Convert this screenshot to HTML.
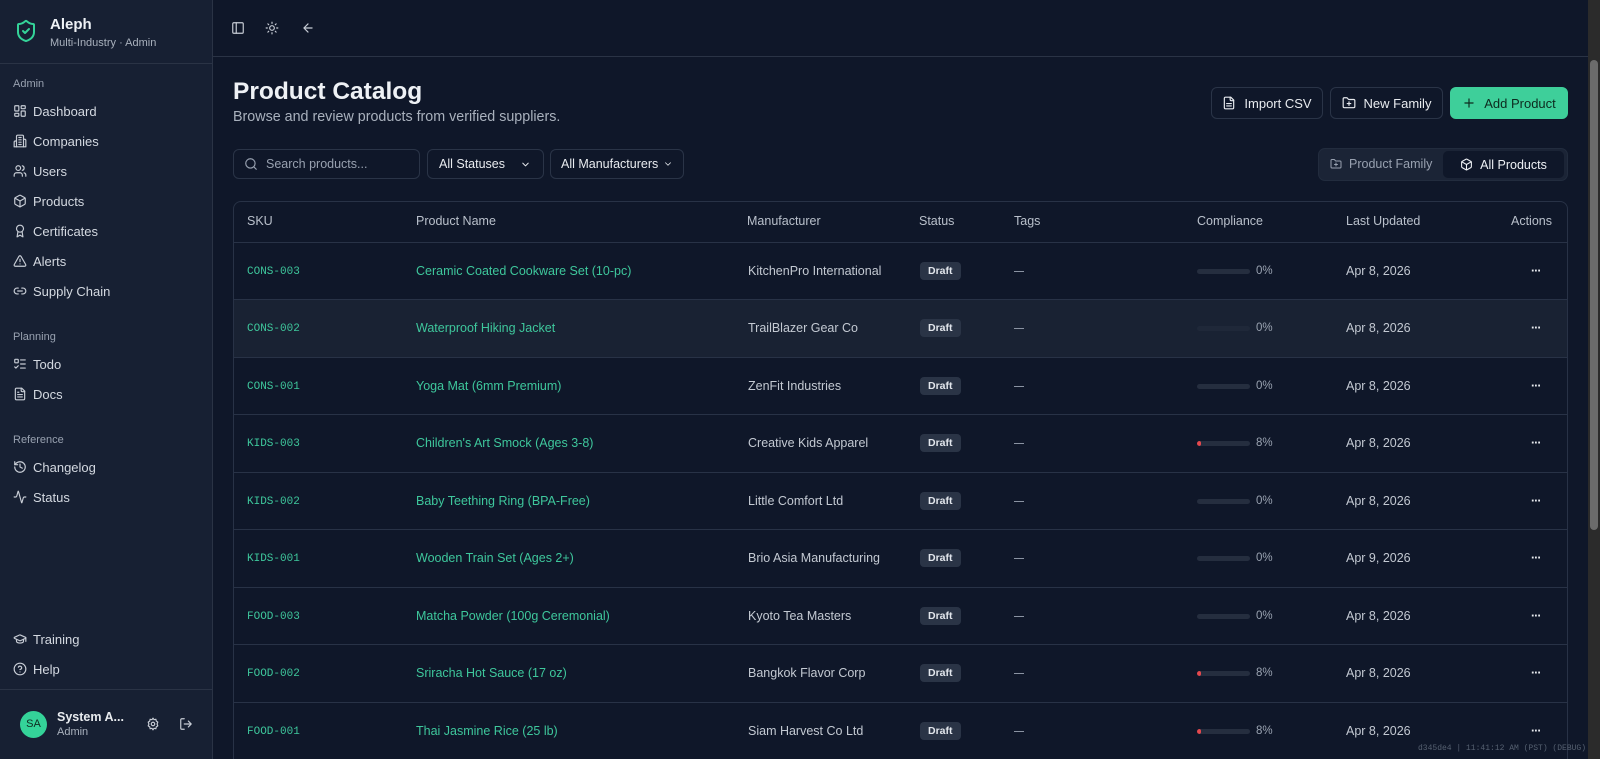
<!DOCTYPE html>
<html style="width:1600px;height:759px;overflow:hidden"><head><meta charset="utf-8">
<style>
*{box-sizing:border-box;margin:0;padding:0}
body{width:1600px;height:759px;overflow:hidden;background:#0f1729;font-family:"Liberation Sans",sans-serif;color:#e2e6ec;position:relative;white-space:nowrap}
#wrap{position:absolute;left:0;top:0;width:1600px;height:759px;overflow:hidden}
.a{position:absolute}
svg{fill:none;stroke:currentColor;stroke-width:2;stroke-linecap:round;stroke-linejoin:round}
#sb{left:0;top:0;width:213px;height:759px;background:#172033;border-right:1px solid #2a3345}
.lbl{font-size:11px;color:#98a1b0;left:13px}
.it{left:13px;font-size:13px;color:#d4d9e1;display:flex;align-items:center;gap:6px;height:20px}
.it svg{width:14px;height:14px;color:#c8cdd6}
.btn{border:1px solid #2a3447;border-radius:6px;height:32px;display:flex;align-items:center;justify-content:center;gap:8px;font-size:13px;color:#e8ebef;background:#0f1729}
.btn svg{width:14px;height:14px;flex:none}
.th{top:201px;height:41px;line-height:41px;font-size:12.5px;color:#b9c0cb}
.row{left:234px;width:1333px;height:58px;border-top:1px solid #283246}
.c{position:absolute;top:0;height:57px;line-height:57px;font-size:12.5px}
.sku{left:13px;font-family:"Liberation Mono",monospace;font-size:11px;color:#3ec79c;top:1px}
.pn{left:182px;color:#3ec79c;font-size:12.5px}
.mf{left:514px;color:#c3c9d2}
.badge{position:absolute;left:686px;top:19px;height:18px;line-height:18px;padding:0 8px;background:#2a3446;border-radius:4px;font-size:10.5px;font-weight:bold;color:#e2e6ec}
.dash{position:absolute;left:780px;top:28px;width:10px;height:1px;background:#8a93a2}
.bar{position:absolute;left:963px;top:26px;width:53px;height:5px;border-radius:3px;background:#252e3f;overflow:hidden}
.bar i{display:block;height:5px;width:4px;background:#e5484d;border-radius:3px}
.pct{left:1022px;color:#9aa3b1;font-size:11.5px}
.dt{left:1112px;color:#c3c9d2}
.dots{left:1297px;color:#e8ebef;font-weight:bold;letter-spacing:-1px;top:0}
</style></head><body><div id="wrap">
<div id="sb" class="a">
  <svg class="a" style="left:14px;top:18px;width:24px;height:26px;color:#34d399" viewBox="0 0 24 24"><path d="M20 13c0 5-3.5 7.5-7.66 8.95a1 1 0 0 1-.67-.01C7.5 20.5 4 18 4 13V6a1 1 0 0 1 1-1c2 0 4.5-1.2 6.24-2.720a1.17 1.17 0 0 1 1.52 0C14.51 3.81 17 5 19 5a1 1 0 0 1 1 1z"/><path d="m9 12 2 2 4-4"/></svg>
  <div class="a" style="left:50px;top:16px;font-size:15px;font-weight:bold;color:#eef1f5">Aleph</div>
  <div class="a" style="left:50px;top:37px;font-size:11px;color:#a9b1bd">Multi-Industry · Admin</div>
  <div class="a" style="left:0;top:63px;width:213px;height:1px;background:#2a3345"></div>
  <div class="a lbl" style="top:78px">Admin</div>
  <div class="a it" style="top:101px"><svg viewBox="0 0 24 24"><rect x="3" y="3" width="7" height="9" rx="1"/><rect x="14" y="3" width="7" height="5" rx="1"/><rect x="14" y="12" width="7" height="9" rx="1"/><rect x="3" y="16" width="7" height="5" rx="1"/></svg>Dashboard</div>
  <div class="a it" style="top:131px"><svg viewBox="0 0 24 24"><path d="M6 22V4a2 2 0 0 1 2-2h8a2 2 0 0 1 2 2v18z"/><path d="M6 12H4a2 2 0 0 0-2 2v8h4M18 9h2a2 2 0 0 1 2 2v11h-4M10 6h4M10 10h4M10 14h4M10 18h4"/></svg>Companies</div>
  <div class="a it" style="top:161px"><svg viewBox="0 0 24 24"><path d="M16 21v-2a4 4 0 0 0-4-4H6a4 4 0 0 0-4 4v2"/><circle cx="9" cy="7" r="4"/><path d="M22 21v-2a4 4 0 0 0-3-3.87M16 3.13a4 4 0 0 1 0 7.75"/></svg>Users</div>
  <div class="a it" style="top:191px"><svg viewBox="0 0 24 24"><path d="M21 8a2 2 0 0 0-1-1.73l-7-4a2 2 0 0 0-2 0l-7 4A2 2 0 0 0 3 8v8a2 2 0 0 0 1 1.73l7 4a2 2 0 0 0 2 0l7-4A2 2 0 0 0 21 16Z"/><path d="m3.3 7 8.7 5 8.7-5M12 22V12"/></svg>Products</div>
  <div class="a it" style="top:221px"><svg viewBox="0 0 24 24"><circle cx="12" cy="8" r="6"/><path d="M15.5 12.9 17 22l-5-3-5 3 1.5-9.1"/></svg>Certificates</div>
  <div class="a it" style="top:251px"><svg viewBox="0 0 24 24"><path d="m21.7 18-8-14a2 2 0 0 0-3.5 0l-8 14A2 2 0 0 0 4 21h16a2 2 0 0 0 1.7-3M12 9v4M12 17h.01"/></svg>Alerts</div>
  <div class="a it" style="top:281px"><svg viewBox="0 0 24 24"><path d="M9 17H7A5 5 0 0 1 7 7h2M15 7h2a5 5 0 1 1 0 10h-2M8 12h8"/></svg>Supply Chain</div>
  <div class="a lbl" style="top:331px">Planning</div>
  <div class="a it" style="top:354px"><svg viewBox="0 0 24 24"><path d="M13 5h8M13 12h8M13 19h8M3 17l2 2 4-4"/><rect x="3" y="4" width="6" height="6" rx="1"/></svg>Todo</div>
  <div class="a it" style="top:384px"><svg viewBox="0 0 24 24"><path d="M15 2H6a2 2 0 0 0-2 2v16a2 2 0 0 0 2 2h12a2 2 0 0 0 2-2V7Z"/><path d="M14 2v4a2 2 0 0 0 2 2h4M10 9H8M16 13H8M16 17H8"/></svg>Docs</div>
  <div class="a lbl" style="top:434px">Reference</div>
  <div class="a it" style="top:457px"><svg viewBox="0 0 24 24"><path d="M3 12a9 9 0 1 0 9-9 9.75 9.75 0 0 0-6.74 2.74L3 8"/><path d="M3 3v5h5M12 7v5l4 2"/></svg>Changelog</div>
  <div class="a it" style="top:487px"><svg viewBox="0 0 24 24"><path d="M22 12h-2.48a2 2 0 0 0-1.93 1.46l-2.35 8.36a.25.25 0 0 1-.48 0L9.24 2.18a.25.25 0 0 0-.48 0l-2.35 8.36A2 2 0 0 1 4.49 12H2"/></svg>Status</div>
  <div class="a it" style="top:629px"><svg viewBox="0 0 24 24"><path d="M21.4 10.9a1 1 0 0 0 0-1.8L12.8 5.2a2 2 0 0 0-1.7 0L2.6 9.1a1 1 0 0 0 0 1.8l8.6 3.9a2 2 0 0 0 1.7 0z"/><path d="M22 10v6M6 12.5V16a6 3 0 0 0 12 0v-3.5"/></svg>Training</div>
  <div class="a it" style="top:659px"><svg viewBox="0 0 24 24"><circle cx="12" cy="12" r="10"/><path d="M9.1 9a3 3 0 0 1 5.8 1c0 2-3 3-3 3M12 17h.01"/></svg>Help</div>
  <div class="a" style="left:0;top:689px;width:213px;height:1px;background:#2a3345"></div>
  <div class="a" style="left:20px;top:711px;width:27px;height:27px;border-radius:50%;background:#34d399;color:#0f2a20;font-size:11px;line-height:27px;text-align:center">SA</div>
  <div class="a" style="left:57px;top:710px;font-size:12.5px;font-weight:bold;color:#e8ebef">System A...</div>
  <div class="a" style="left:57px;top:726px;font-size:11px;color:#a9b1bd">Admin</div>
  <svg class="a" style="left:146px;top:717px;width:14px;height:14px;color:#c8cdd6" viewBox="0 0 24 24"><circle cx="12" cy="12" r="3"/><path d="M12 2l1.8 2.6 3.1-.7.7 3.1L20.2 8.8 19 12l1.2 3.2-2.6 1.8-.7 3.1-3.1-.7L12 22l-1.8-2.6-3.1.7-.7-3.1L3.8 15.2 5 12 3.8 8.8 6.4 7l.7-3.1 3.1.7z"/></svg>
  <svg class="a" style="left:179px;top:717px;width:14px;height:14px;color:#c8cdd6" viewBox="0 0 24 24"><path d="M9 21H5a2 2 0 0 1-2-2V5a2 2 0 0 1 2-2h4M16 17l5-5-5-5M21 12H9"/></svg>
</div>
<!-- header -->
<div class="a" style="left:213px;top:56px;width:1375px;height:1px;background:#2a3345"></div>
<svg class="a" style="left:231px;top:21px;width:14px;height:14px;color:#c8cdd6" viewBox="0 0 24 24"><rect x="3" y="3" width="18" height="18" rx="2"/><path d="M9 3v18"/></svg>
<svg class="a" style="left:265px;top:21px;width:14px;height:14px;color:#c8cdd6" viewBox="0 0 24 24"><circle cx="12" cy="12" r="4"/><path d="M12 2v2M12 20v2M4.93 4.93l1.41 1.41M17.66 17.66l1.41 1.41M2 12h2M20 12h2M6.34 17.66l-1.41 1.41M19.07 4.93l-1.41 1.41"/></svg>
<svg class="a" style="left:301px;top:21px;width:14px;height:14px;color:#c8cdd6" viewBox="0 0 24 24"><path d="m12 19-7-7 7-7M19 12H5"/></svg>
<!-- title -->
<div class="a" style="left:233px;top:78px;font-size:24.5px;font-weight:bold;color:#eef1f5">Product Catalog</div>
<div class="a" style="left:233px;top:109px;font-size:14.3px;color:#a9b1bd">Browse and review products from verified suppliers.</div>
<div class="a btn" style="left:1211px;top:87px;width:112px"><svg viewBox="0 0 24 24"><path d="M15 2H6a2 2 0 0 0-2 2v16a2 2 0 0 0 2 2h12a2 2 0 0 0 2-2V7Z"/><path d="M14 2v4a2 2 0 0 0 2 2h4M8 13h8M8 17h8"/></svg>Import CSV</div>
<div class="a btn" style="left:1330px;top:87px;width:113px"><svg viewBox="0 0 24 24"><path d="M20 20a2 2 0 0 0 2-2V8a2 2 0 0 0-2-2h-7.9a2 2 0 0 1-1.69-.9L9.6 3.9A2 2 0 0 0 7.93 3H4a2 2 0 0 0-2 2v13a2 2 0 0 0 2 2ZM12 10v6M9 13h6"/></svg>New Family</div>
<div class="a btn" style="left:1450px;top:87px;width:118px;background:#3ecf9a;border-color:#3ecf9a;color:#0d2a1f"><svg viewBox="0 0 24 24"><path d="M5 12h14M12 5v14"/></svg>Add Product</div>
<!-- filters -->
<div class="a btn" style="left:233px;top:149px;width:187px;height:30px;justify-content:flex-start;padding-left:10px;color:#98a1b0;font-size:12.5px"><svg viewBox="0 0 24 24"><circle cx="11" cy="11" r="8"/><path d="m21 21-4.3-4.3"/></svg>Search products...</div>
<div class="a btn" style="left:427px;top:149px;width:117px;height:30px;justify-content:space-between;padding:0 12px 0 11px;font-size:12.5px">All Statuses<svg style="width:11px;height:11px" viewBox="0 0 24 24"><path d="m6 9 6 6 6-6"/></svg></div>
<div class="a btn" style="left:550px;top:149px;width:134px;height:30px;justify-content:space-between;padding:0 10px 0 10px;font-size:12.5px;gap:2px">All Manufacturers<svg style="width:10px;height:10px" viewBox="0 0 24 24"><path d="m6 9 6 6 6-6"/></svg></div>
<div class="a" style="left:1318px;top:148px;width:250px;height:33px;background:#1b2436;border-radius:7px;border:1px solid #222c3e"></div>
<div class="a" style="left:1330px;top:157px;font-size:12.5px;color:#98a1b0;display:flex;align-items:center;gap:7px"><svg style="width:12px;height:12px" viewBox="0 0 24 24"><path d="M20 20a2 2 0 0 0 2-2V8a2 2 0 0 0-2-2h-7.9a2 2 0 0 1-1.69-.9L9.6 3.9A2 2 0 0 0 7.93 3H4a2 2 0 0 0-2 2v13a2 2 0 0 0 2 2ZM12 10v6M9 13h6"/></svg>Product Family</div>
<div class="a" style="left:1443px;top:151px;width:121px;height:27px;background:#0f1729;border-radius:5px;font-size:12.5px;color:#eef1f5;display:flex;align-items:center;justify-content:center;gap:7px"><svg style="width:13px;height:13px" viewBox="0 0 24 24"><path d="M21 8a2 2 0 0 0-1-1.73l-7-4a2 2 0 0 0-2 0l-7 4A2 2 0 0 0 3 8v8a2 2 0 0 0 1 1.73l7 4a2 2 0 0 0 2 0l7-4A2 2 0 0 0 21 16Z"/><path d="m3.3 7 8.7 5 8.7-5M12 22V12"/></svg>All Products</div>
<!-- table -->
<div class="a" style="left:233px;top:201px;width:1335px;height:558px;border:1px solid #283246;border-bottom:none;border-radius:8px 8px 0 0"></div>
<div class="a th" style="left:247px">SKU</div>
<div class="a th" style="left:416px">Product Name</div>
<div class="a th" style="left:747px">Manufacturer</div>
<div class="a th" style="left:919px">Status</div>
<div class="a th" style="left:1014px">Tags</div>
<div class="a th" style="left:1197px">Compliance</div>
<div class="a th" style="left:1346px">Last Updated</div>
<div class="a th" style="left:1511px">Actions</div>

<div class="a row" style="top:242px"><div class="c sku">CONS-003</div><div class="c pn">Ceramic Coated Cookware Set (10-pc)</div><div class="c mf">KitchenPro International</div><span class="badge">Draft</span><span class="dash"></span><span class="bar"></span><div class="c pct">0%</div><div class="c dt">Apr 8, 2026</div><div class="c dots">···</div></div>
<div class="a row" style="top:299px;background:#192233"><div class="c sku">CONS-002</div><div class="c pn">Waterproof Hiking Jacket</div><div class="c mf">TrailBlazer Gear Co</div><span class="badge">Draft</span><span class="dash"></span><span class="bar" style="background:#1f2839"></span><div class="c pct">0%</div><div class="c dt">Apr 8, 2026</div><div class="c dots">···</div></div>
<div class="a row" style="top:357px"><div class="c sku">CONS-001</div><div class="c pn">Yoga Mat (6mm Premium)</div><div class="c mf">ZenFit Industries</div><span class="badge">Draft</span><span class="dash"></span><span class="bar"></span><div class="c pct">0%</div><div class="c dt">Apr 8, 2026</div><div class="c dots">···</div></div>
<div class="a row" style="top:414px"><div class="c sku">KIDS-003</div><div class="c pn">Children's Art Smock (Ages 3-8)</div><div class="c mf">Creative Kids Apparel</div><span class="badge">Draft</span><span class="dash"></span><span class="bar"><i></i></span><div class="c pct">8%</div><div class="c dt">Apr 8, 2026</div><div class="c dots">···</div></div>
<div class="a row" style="top:472px"><div class="c sku">KIDS-002</div><div class="c pn">Baby Teething Ring (BPA-Free)</div><div class="c mf">Little Comfort Ltd</div><span class="badge">Draft</span><span class="dash"></span><span class="bar"></span><div class="c pct">0%</div><div class="c dt">Apr 8, 2026</div><div class="c dots">···</div></div>
<div class="a row" style="top:529px"><div class="c sku">KIDS-001</div><div class="c pn">Wooden Train Set (Ages 2+)</div><div class="c mf">Brio Asia Manufacturing</div><span class="badge">Draft</span><span class="dash"></span><span class="bar"></span><div class="c pct">0%</div><div class="c dt">Apr 9, 2026</div><div class="c dots">···</div></div>
<div class="a row" style="top:587px"><div class="c sku">FOOD-003</div><div class="c pn">Matcha Powder (100g Ceremonial)</div><div class="c mf">Kyoto Tea Masters</div><span class="badge">Draft</span><span class="dash"></span><span class="bar"></span><div class="c pct">0%</div><div class="c dt">Apr 8, 2026</div><div class="c dots">···</div></div>
<div class="a row" style="top:644px"><div class="c sku">FOOD-002</div><div class="c pn">Sriracha Hot Sauce (17 oz)</div><div class="c mf">Bangkok Flavor Corp</div><span class="badge">Draft</span><span class="dash"></span><span class="bar"><i></i></span><div class="c pct">8%</div><div class="c dt">Apr 8, 2026</div><div class="c dots">···</div></div>
<div class="a row" style="top:702px;height:57px"><div class="c sku">FOOD-001</div><div class="c pn">Thai Jasmine Rice (25 lb)</div><div class="c mf">Siam Harvest Co Ltd</div><span class="badge">Draft</span><span class="dash"></span><span class="bar"><i></i></span><div class="c pct">8%</div><div class="c dt">Apr 8, 2026</div><div class="c dots">···</div></div>

<div class="a" style="left:1418px;top:744px;font-family:'Liberation Mono',monospace;font-size:8px;color:#556070">d345de4 | 11:41:12 AM (PST) (DEBUG)</div>
<!-- scrollbar -->
<div class="a" style="left:1588px;top:0;width:12px;height:759px;background:#2b2b2b"></div>
<div class="a" style="left:1590px;top:60px;width:8px;height:470px;background:#6b6b6b;border-radius:4px"></div>
</div></body></html>
